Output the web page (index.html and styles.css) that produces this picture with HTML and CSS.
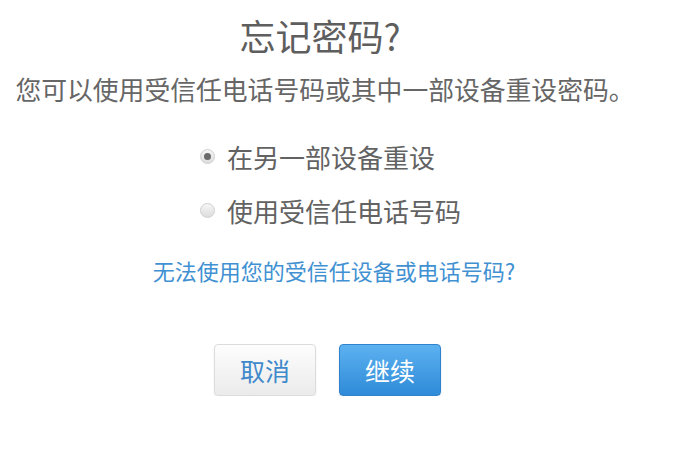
FILE: index.html
```html
<!DOCTYPE html>
<html lang="zh-CN">
<head>
  <meta charset="UTF-8">
  <title>忘记密码</title>
  <link rel="stylesheet" href="styles.css">
</head>
<body>
  <div class="panel">
    <h1 class="title">忘记密码?</h1>
    <p class="intro">您可以使用受信任电话号码或其中一部设备重设密码。</p>

    <!-- reset method -->
    <div class="options">
      <label class="option">
        <input type="radio" name="method" checked>
        <span class="dot"></span>
        <span>在另一部设备重设</span>
      </label>
      <label class="option">
        <input type="radio" name="method">
        <span class="dot"></span>
        <span>使用受信任电话号码</span>
      </label>
    </div>

    <p class="help"><a href="#">无法使用您的受信任设备或电话号码?</a></p>

    <div class="actions">
      <button class="btn btn-cancel">取消</button>
      <button class="btn btn-primary">继续</button>
    </div>
  </div>
</body>
</html>
```

FILE: styles.css
```css
body {
  margin: 0;
  background: #fff;
  font-family: "Noto Sans CJK SC", "Noto Sans", sans-serif;
  color: #626262;
}
.panel {
  width: 650px;
  text-align: center;
}
.title {
  margin: 15px 0 0;
  padding-right: 10px;
  font-size: 36px;
  line-height: 40px;
  font-weight: normal;
  color: #5e5e5e;
}
.intro {
  margin: 17px 0 0;
  font-size: 25.8px;
  line-height: 34px;
  color: #666;
}
.options {
  margin: 23px 0 0 200px;
  text-align: left;
}
.option {
  display: flex;
  align-items: center;
  height: 54px;
  font-size: 26px;
  color: #626262;
  cursor: pointer;
}
.option input {
  display: none;
}
.dot {
  width: 13px;
  height: 13px;
  border: 1px solid #cfcfcf;
  border-radius: 50%;
  background: linear-gradient(#f6f6f6, #dddddd);
  margin-right: 12px;
  position: relative;
}
.option input:checked + .dot::after {
  content: "";
  position: absolute;
  left: 3px;
  top: 3px;
  width: 7px;
  height: 7px;
  border-radius: 50%;
  background: #6a6a6a;
}
.help {
  margin: 18px 0 0;
  padding-left: 18px;
  font-size: 22px;
  line-height: 30px;
}
.help a {
  color: #4191d2;
  text-decoration: none;
}
.actions {
  margin-top: 59px;
  display: flex;
  justify-content: center;
  gap: 23px;
  padding-left: 5px;
}
.btn {
  width: 102px;
  height: 52px;
  border-radius: 4px;
  font-family: inherit;
  font-size: 25px;
  cursor: pointer;
}
.btn-cancel {
  border: 1px solid #dcdcdc;
  background: linear-gradient(#fdfdfd, #ebebeb);
  color: #4089cb;
  box-shadow: 0 1px 2px rgba(0,0,0,0.08);
}
.btn-primary {
  border: 1px solid #2f82cc;
  background: linear-gradient(#5cb1f0, #2f8bd8);
  color: #fff;
  box-shadow: 0 1px 2px rgba(0,0,0,0.12);
}
```
